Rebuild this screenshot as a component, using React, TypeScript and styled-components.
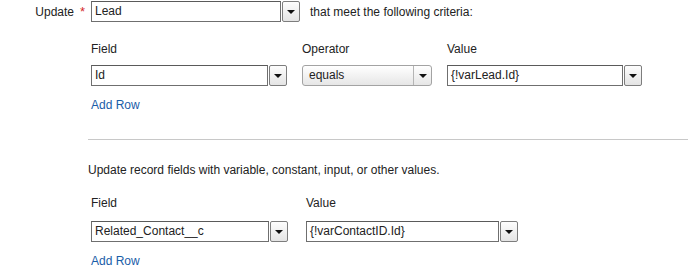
import React from "react";
import styled, { createGlobalStyle } from "styled-components";

const Global = createGlobalStyle`
  html, body { margin: 0; padding: 0; background: #fff; }
  body { font-family: "Liberation Sans", Arial, sans-serif; font-size: 12px; color: #222; }
`;

const Page = styled.div`
  width: 688px;
  height: 270px;
  overflow: hidden;
  position: relative;
`;

const TopRow = styled.div`
  display: flex;
  align-items: center;
  margin-top: 1px;
  height: 21px;
`;

const MainLabel = styled.span`
  width: 74px;
  text-align: right;
  line-height: 14px;
`;

const Required = styled.span`
  color: #d42a2a;
  width: 17px;
  text-align: center;
  font-size: 13px;
  line-height: 14px;
`;

const AfterText = styled.span`
  margin-left: 10px;
  line-height: 14px;
`;

const Section = styled.div<{ $top: number }>`
  margin-top: ${(p) => p.$top}px;
  padding-left: 91px;
`;

const Grid = styled.div<{ $cols: string }>`
  display: grid;
  grid-template-columns: ${(p) => p.$cols};
  column-gap: 15px;
`;

const ColLabel = styled.div`
  line-height: 14px;
  height: 14px;
`;

const Controls = styled(Grid)<{ $gap: number }>`
  margin-top: ${(p) => p.$gap}px;
`;

const Combo = styled.div`
  display: flex;
  gap: 1px;
  height: 21px;
`;

const TextBox = styled.div<{ $w: number }>`
  box-sizing: border-box;
  width: ${(p) => p.$w}px;
  height: 21px;
  border: 1px solid #6f6f6f;
  border-top-color: #5a5a5a;
  padding: 0 3px;
  line-height: 19px;
  background: #fff;
  white-space: nowrap;
  overflow: hidden;
`;

const DropButton = styled.div`
  box-sizing: border-box;
  width: 18px;
  height: 21px;
  border: 1px solid #7d7d7d;
  border-radius: 2px;
  background: linear-gradient(#fdfdfd, #e4e4e4);
  display: flex;
  align-items: center;
  justify-content: center;
`;

const Arrow = styled.span`
  width: 0;
  height: 0;
  border-left: 4px solid transparent;
  border-right: 4px solid transparent;
  border-top: 4px solid #111;
  margin-top: 1px;
`;

const SelectBox = styled.div`
  box-sizing: border-box;
  width: 130px;
  height: 21px;
  border: 1px solid #a3a3a3;
  border-radius: 3px;
  background: linear-gradient(#ffffff, #e6e6e6);
  display: flex;
  align-items: stretch;
`;

const SelectText = styled.span`
  flex: 1;
  padding-left: 6px;
  line-height: 19px;
`;

const SelectArrow = styled.span`
  width: 17px;
  border-left: 1px solid #b5b5b5;
  display: flex;
  align-items: center;
  justify-content: center;
`;

const LinkText = styled.a<{ $top: number }>`
  display: block;
  margin-top: ${(p) => p.$top}px;
  color: #1a5da8;
  line-height: 14px;
  text-decoration: none;
  width: max-content;
`;

const Divider = styled.hr`
  margin: 27px 0 0 88px;
  border: 0;
  border-top: 1px solid #c8c8c8;
  height: 0;
`;

const Note = styled.div`
  margin-top: 23px;
  padding-left: 88px;
  line-height: 14px;
`;

const ComboField = ({ value, w }: { value: string; w: number }) => (
  <Combo>
    <TextBox $w={w}>{value}</TextBox>
    <DropButton>
      <Arrow />
    </DropButton>
  </Combo>
);

export default function App() {
  return (
    <Page>
      <Global />
      <TopRow>
        <MainLabel>Update</MainLabel>
        <Required>*</Required>
        <ComboField value="Lead" w={190} />
        <AfterText>that meet the following criteria:</AfterText>
      </TopRow>

      <Section $top={20}>
        <Grid $cols="196px 130px 195px">
          <ColLabel>Field</ColLabel>
          <ColLabel>Operator</ColLabel>
          <ColLabel>Value</ColLabel>
        </Grid>
        <Controls $cols="196px 130px 195px" $gap={9}>
          <ComboField value="Id" w={178} />
          <SelectBox>
            <SelectText>equals</SelectText>
            <SelectArrow>
              <Arrow />
            </SelectArrow>
          </SelectBox>
          <ComboField value="{!varLead.Id}" w={177} />
        </Controls>
        <LinkText $top={12} href="#">Add Row</LinkText>
      </Section>

      <Divider />

      <Note>Update record fields with variable, constant, input, or other values.</Note>

      <Section $top={19}>
        <Grid $cols="200px 212px">
          <ColLabel>Field</ColLabel>
          <ColLabel>Value</ColLabel>
        </Grid>
        <Controls $cols="200px 212px" $gap={11}>
          <ComboField value="Related_Contact__c" w={178} />
          <ComboField value="{!varContactID.Id}" w={193} />
        </Controls>
        <LinkText $top={12} href="#">Add Row</LinkText>
      </Section>
    </Page>
  );
}
